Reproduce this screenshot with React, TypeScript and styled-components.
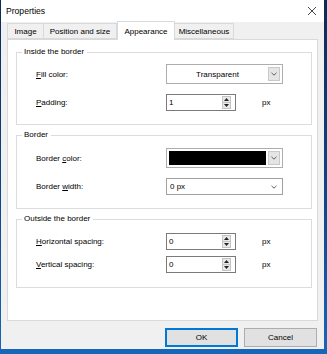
import React from "react";
import styled, { createGlobalStyle } from "styled-components";

const GlobalStyle = createGlobalStyle`
  html, body {
    margin: 0;
    padding: 0;
  }
  body {
    width: 327px;
    height: 354px;
    overflow: hidden;
    background: linear-gradient(180deg, #0a2b57 0%, #0d4688 55%, #1766bb 100%);
    font-family: "Liberation Sans", Arial, sans-serif;
    font-size: 8px;
    color: #000;
  }
`;

const Window = styled.div`
  width: 323px;
  height: 349px;
  margin-left: 1px;
  background: #f0f0f0;
  display: flex;
  flex-direction: column;
`;

const TitleBar = styled.div`
  height: 22px;
  flex: none;
  background: #fff;
  display: flex;
  align-items: center;
  justify-content: space-between;
  padding: 0 7px 0 5px;
  font-size: 8.6px;
`;

const Body = styled.div`
  flex: 1;
  display: flex;
  flex-direction: column;
  padding: 0 6px 0 6px;
`;

const TabRow = styled.div`
  height: 17px;
  display: flex;
  align-items: flex-end;
  position: relative;
  z-index: 1;
`;

const Tab = styled.div<{ $w: number; $active?: boolean }>`
  width: ${(p) => p.$w}px;
  height: ${(p) => (p.$active ? 19 : 16)}px;
  margin-bottom: ${(p) => (p.$active ? -1 : 0)}px;
  box-sizing: border-box;
  border: 1px solid #d9d9d9;
  border-bottom: ${(p) => (p.$active ? "none" : "1px solid #d9d9d9")};
  border-left: ${(p) => (p.$active ? "1px solid #d9d9d9" : "none")};
  background: ${(p) => (p.$active ? "#fff" : "#f0f0f0")};
  display: flex;
  align-items: center;
  justify-content: center;
  padding-top: ${(p) => (p.$active ? 0 : 1)}px;
  &:first-child {
    border-left: 1px solid #d9d9d9;
  }
`;

const Panel = styled.div`
  height: 282px;
  box-sizing: border-box;
  background: #fff;
  border: 1px solid #d9d9d9;
  padding: 6px 5px 0 8px;
  display: flex;
  flex-direction: column;
  gap: 4px;
`;

const Group = styled.fieldset<{ $h: number; $top: number }>`
  margin: 0;
  height: ${(p) => p.$h}px;
  box-sizing: border-box;
  border: 1px solid #dcdcdc;
  padding: ${(p) => p.$top}px 0 0 19px;
  min-width: 0;
`;

const Legend = styled.legend`
  padding: 0 3px 0 2px;
  margin-left: -14px;
  line-height: 12px;
  font-size: 8px;
`;

const Rows = styled.div<{ $gap: number }>`
  display: grid;
  grid-template-columns: 130px 1fr;
  row-gap: ${(p) => p.$gap}px;
  align-items: center;
`;

const Label = styled.div`
  white-space: nowrap;
`;

const Key = styled.span`
  text-decoration: underline;
  text-underline-offset: 1px;
`;

const Field = styled.div`
  display: flex;
  align-items: center;
  gap: 26px;
`;

const Combo = styled.div<{ $h: number; $dark?: boolean }>`
  width: 117px;
  height: ${(p) => p.$h}px;
  box-sizing: border-box;
  border: 1px solid ${(p) => (p.$dark ? "#a0a0a0" : "#adadad")};
  background: #fff;
  display: flex;
  align-items: center;
  padding: 2px;
  gap: 2px;
`;

const ComboValue = styled.div<{ $center?: boolean }>`
  flex: 1;
  text-align: ${(p) => (p.$center ? "center" : "left")};
  padding-left: ${(p) => (p.$center ? 0 : 1)}px;
`;

const Swatch = styled.div`
  flex: 1;
  align-self: stretch;
  background: #000;
`;

const DropButton = styled.div`
  width: 12px;
  align-self: stretch;
  box-sizing: border-box;
  border: 1px solid #c9c9c9;
  background: #e5e5e5;
  display: flex;
  align-items: center;
  justify-content: center;
`;

const PlainArrow = styled.div`
  width: 12px;
  display: flex;
  align-items: center;
  justify-content: center;
`;

const Spin = styled.div`
  width: 70px;
  height: 17px;
  box-sizing: border-box;
  border: 1px solid #7a7a7a;
  background: #fff;
  display: flex;
  align-items: center;
  padding: 1px 4px 1px 2px;
`;

const SpinValue = styled.div`
  flex: 1;
`;

const SpinButtons = styled.div`
  width: 9px;
  align-self: stretch;
  box-sizing: border-box;
  border: 1px solid #c4c4c4;
  background: #e8e8e8;
  display: flex;
  flex-direction: column;
`;

const SpinHalf = styled.div<{ $bottom?: boolean }>`
  flex: 1;
  display: flex;
  align-items: center;
  justify-content: center;
  border-top: ${(p) => (p.$bottom ? "1px solid #c4c4c4" : "none")};
`;

const Footer = styled.div`
  height: 26px;
  display: flex;
  justify-content: flex-end;
  align-items: flex-end;
  gap: 6px;
  padding-right: 1px;
`;

const Button = styled.div<{ $primary?: boolean }>`
  width: 73px;
  height: 19px;
  box-sizing: border-box;
  background: #e1e1e1;
  border: 1px solid ${(p) => (p.$primary ? "#0078d7" : "#adadad")};
  box-shadow: ${(p) => (p.$primary ? "inset 0 0 0 1px #0078d7" : "none")};
  display: flex;
  align-items: center;
  justify-content: center;
`;

const Chevron = () => (
  <svg width="6" height="4" viewBox="0 0 6 4">
    <path d="M0.5 0.8 L3 3.2 L5.5 0.8" fill="none" stroke="#606060" strokeWidth="1" />
  </svg>
);

const Tri = ({ up }: { up?: boolean }) => (
  <svg width="5" height="3" viewBox="0 0 5 3">
    <path d={up ? "M0 3 L2.5 0 L5 3 Z" : "M0 0 L2.5 3 L5 0 Z"} fill="#222" />
  </svg>
);

const SpinBox = ({ value }: { value: string }) => (
  <Spin>
    <SpinValue>{value}</SpinValue>
    <SpinButtons>
      <SpinHalf>
        <Tri up />
      </SpinHalf>
      <SpinHalf $bottom>
        <Tri />
      </SpinHalf>
    </SpinButtons>
  </Spin>
);

const App = () => {
  return (
    <>
      <GlobalStyle />
      <Window>
        <TitleBar>
          <span>Properties</span>
          <svg width="10" height="10" viewBox="0 0 10 10">
            <path d="M1 1 L9 9 M9 1 L1 9" stroke="#333" strokeWidth="0.9" />
          </svg>
        </TitleBar>
        <Body>
          <TabRow>
            <Tab $w={37}>Image</Tab>
            <Tab $w={73}>Position and size</Tab>
            <Tab $w={58} $active>
              Appearance
            </Tab>
            <Tab $w={59}>Miscellaneous</Tab>
          </TabRow>
          <Panel>
            <Group $h={79} $top={6}>
              <Legend>Inside the border</Legend>
              <Rows $gap={10}>
                <Label>
                  <Key>F</Key>ill color:
                </Label>
                <Combo $h={20}>
                  <ComboValue $center>Transparent</ComboValue>
                  <DropButton>
                    <Chevron />
                  </DropButton>
                </Combo>
                <Label>
                  <Key>P</Key>adding:
                </Label>
                <Field>
                  <SpinBox value="1" />
                  <span>px</span>
                </Field>
              </Rows>
            </Group>
            <Group $h={80} $top={7}>
              <Legend>Border</Legend>
              <Rows $gap={10}>
                <Label>
                  Border <Key>c</Key>olor:
                </Label>
                <Combo $h={20}>
                  <Swatch />
                  <DropButton>
                    <Chevron />
                  </DropButton>
                </Combo>
                <Label>
                  Border <Key>w</Key>idth:
                </Label>
                <Combo $h={17} $dark>
                  <ComboValue>0 px</ComboValue>
                  <PlainArrow>
                    <Chevron />
                  </PlainArrow>
                </Combo>
              </Rows>
            </Group>
            <Group $h={75} $top={8}>
              <Legend>Outside the border</Legend>
              <Rows $gap={6}>
                <Label>
                  <Key>H</Key>orizontal spacing:
                </Label>
                <Field>
                  <SpinBox value="0" />
                  <span>px</span>
                </Field>
                <Label>
                  <Key>V</Key>ertical spacing:
                </Label>
                <Field>
                  <SpinBox value="0" />
                  <span>px</span>
                </Field>
              </Rows>
            </Group>
          </Panel>
          <Footer>
            <Button $primary>OK</Button>
            <Button>Cancel</Button>
          </Footer>
        </Body>
      </Window>
    </>
  );
};

export default App;
